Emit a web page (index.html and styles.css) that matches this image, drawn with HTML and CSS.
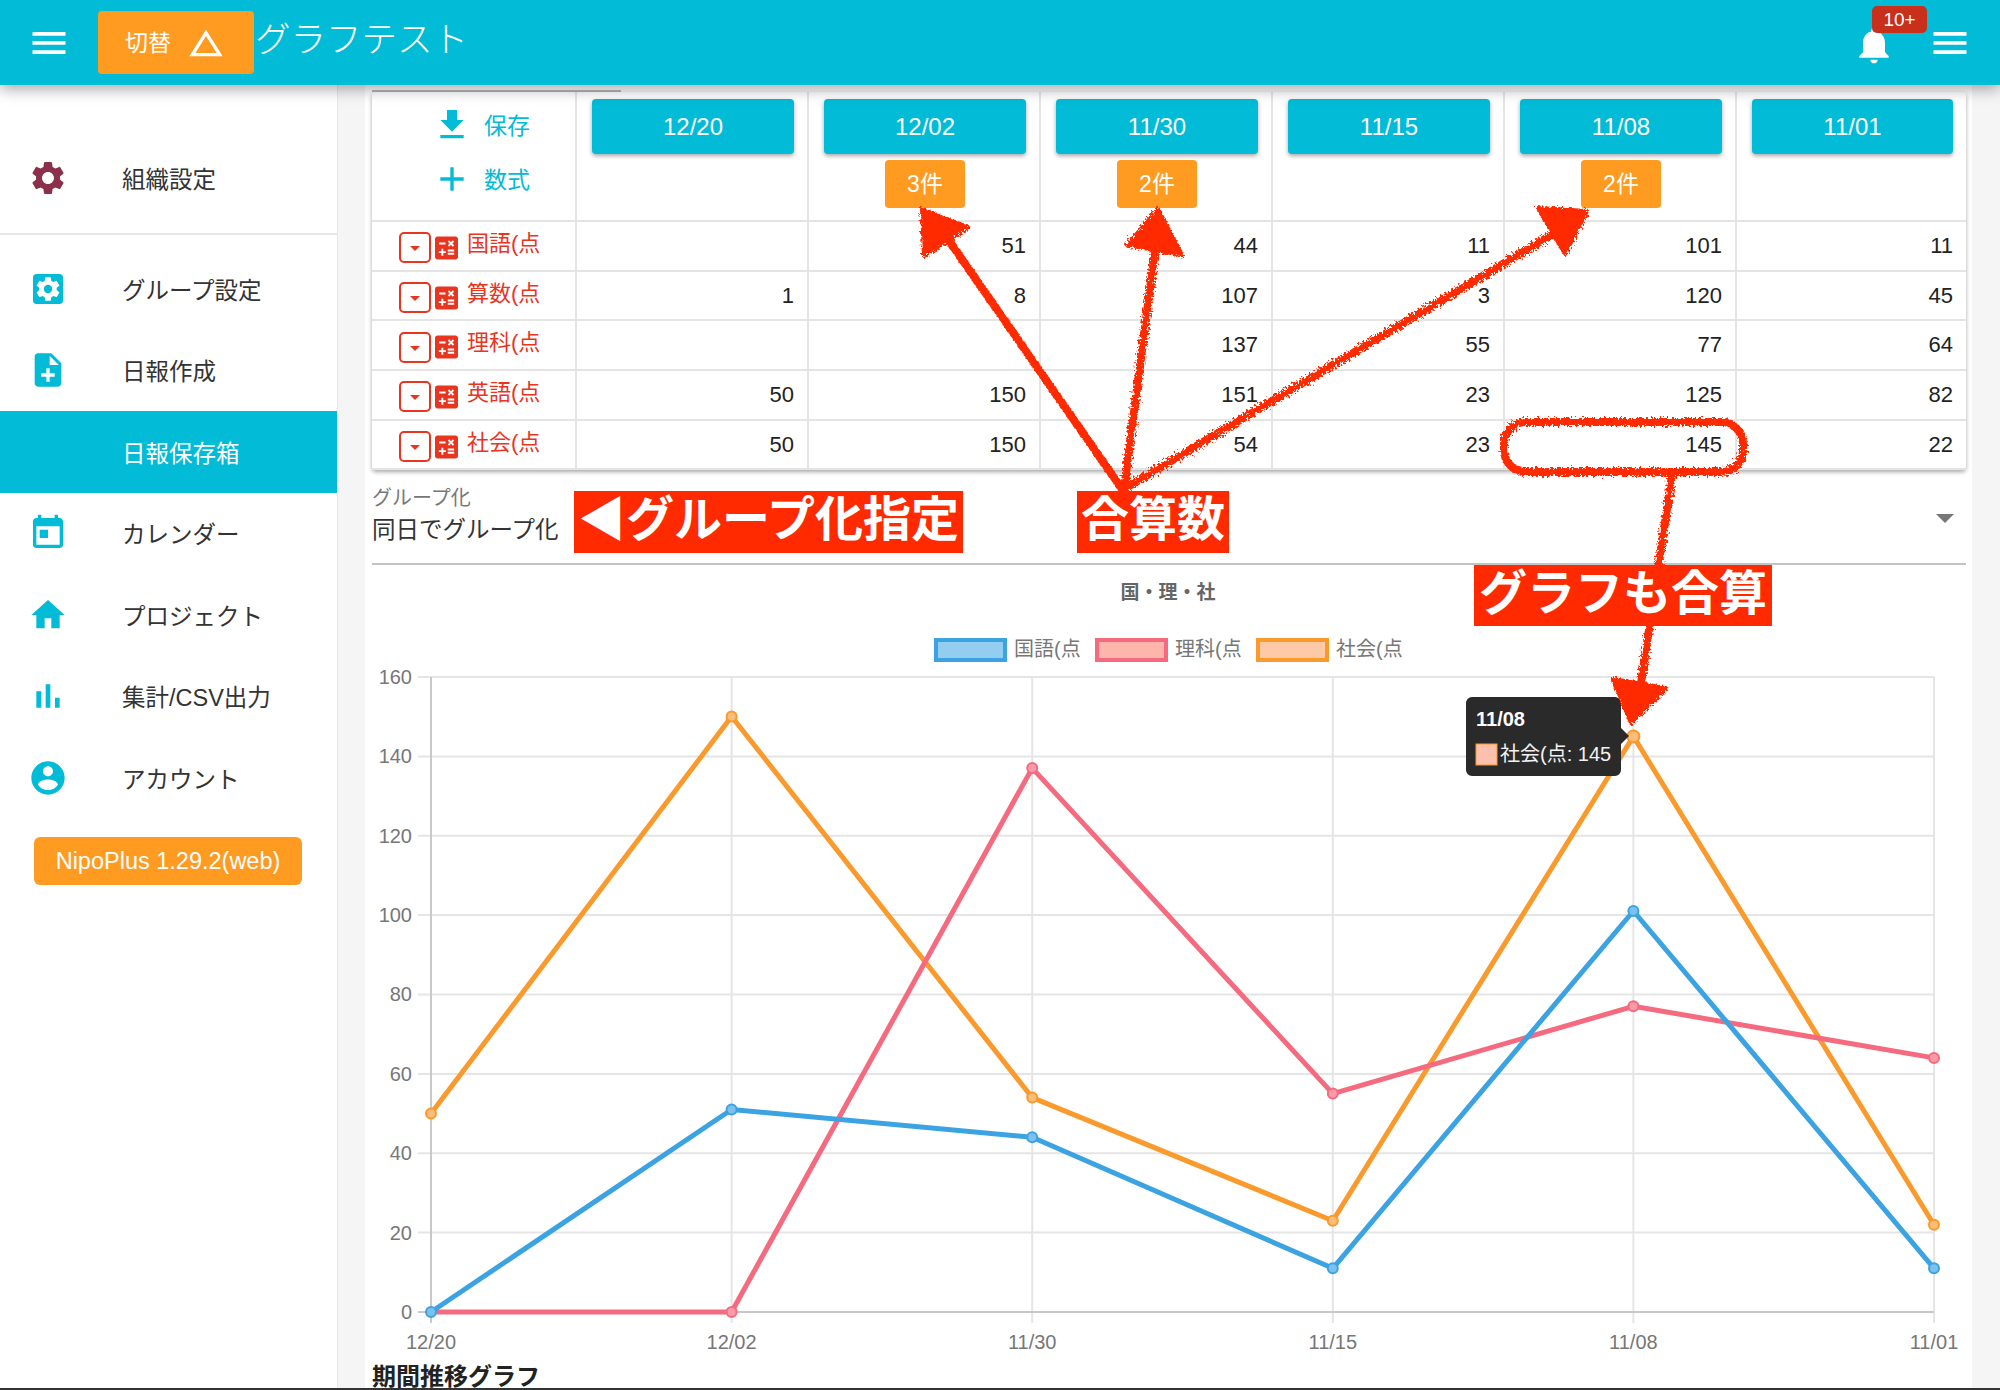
FILE: index.html
```html
<!DOCTYPE html>
<html lang="ja">
<head>
    <meta charset="UTF-8">
    <title>グラフテスト</title>
    <link rel="stylesheet" href="styles.css">
</head>
<body>
    <svg class="defs" width="0" height="0">
        <symbol id="i-menu" viewBox="0 0 24 24"><path d="M3 18h18v-2H3v2zm0-5h18v-2H3v2zm0-7v2h18V6H3z"/></symbol>
        <symbol id="i-calc" viewBox="3 3 18 18"><path d="M19 3H5c-1.1 0-2 .9-2 2v14c0 1.1.9 2 2 2h14c1.1 0 2-.9 2-2V5c0-1.1-.9-2-2-2zm-5.97 4.06L14.09 6l1.41 1.41L16.91 6l1.06 1.06-1.41 1.41 1.41 1.41-1.06 1.06-1.41-1.4-1.41 1.41-1.06-1.06 1.41-1.41-1.41-1.42zm-6.78.66h5v1.5h-5v-1.5zM11.5 16h-2v2H8v-2H6v-1.5h2v-2h1.5v2h2V16zm6.5 1.25h-5v-1.5h5v1.5zm0-2.5h-5v-1.5h5v1.5z"/></symbol>
        <filter id="rough" x="-5%" y="-5%" width="110%" height="110%">
            <feTurbulence type="fractalNoise" baseFrequency="0.45" numOctaves="2" seed="4"/>
            <feDisplacementMap in="SourceGraphic" scale="8"/>
        </filter>
    </svg>

    <header class="topbar">
        <svg class="menu-icon"><use href="#i-menu"/></svg>
        <button class="switch-btn"><span class="switch-text">切替</span>
            <svg class="switch-icon" viewBox="0 0 24 24"><path d="M12 7.77L18.39 18H5.61L12 7.77M12 4L2 20h20L12 4z"/></svg>
        </button>
        <h1 class="title">グラフテスト</h1>
        <div class="bell">
            <svg class="bell-icon" viewBox="0 0 24 24"><path d="M12 22c1.1 0 2-.9 2-2h-4c0 1.1.89 2 2 2zm6-6v-5c0-3.07-1.64-5.64-4.5-6.32V4c0-.83-.67-1.5-1.5-1.5s-1.5.67-1.5 1.5v.68C7.63 5.36 6 7.92 6 11v5l-2 2v1h16v-1l-2-2z"/></svg>
            <span class="badge">10+</span>
        </div>
        <svg class="menu-icon menu-right"><use href="#i-menu"/></svg>
    </header>

    <div class="layout">
        <nav class="sidebar">
            <div class="org">
                <a class="nav-item">
                    <svg class="nav-icon maroon" viewBox="0 0 24 24"><path d="M19.14 12.94c.04-.3.06-.61.06-.94 0-.32-.02-.64-.07-.94l2.03-1.58c.18-.14.23-.41.12-.61l-1.92-3.32c-.12-.22-.37-.29-.59-.22l-2.39.96c-.5-.38-1.03-.7-1.62-.94l-.36-2.54c-.04-.24-.24-.41-.48-.41h-3.84c-.24 0-.43.17-.47.41l-.36 2.54c-.59.24-1.13.57-1.62.94l-2.39-.96c-.22-.08-.47 0-.59.22L2.74 8.87c-.12.21-.08.47.12.61l2.03 1.58c-.05.3-.09.63-.09.94s.02.64.07.94l-2.03 1.58c-.18.14-.23.41-.12.61l1.92 3.32c.12.22.37.29.59.22l2.39-.96c.5.38 1.03.7 1.62.94l.36 2.54c.05.24.24.41.48.41h3.84c.24 0 .44-.17.47-.41l.36-2.54c.59-.24 1.13-.56 1.62-.94l2.39.96c.22.08.47 0 .59-.22l1.92-3.32c.12-.22.07-.47-.12-.61l-2.01-1.58zM12 15.6c-1.98 0-3.6-1.62-3.6-3.6s1.62-3.6 3.6-3.6 3.6 1.62 3.6 3.6-1.62 3.6-3.6 3.6z"/></svg>
                    組織設定
                </a>
            </div>
            <div class="nav-list">
                <a class="nav-item">
                    <svg class="nav-icon" viewBox="0 0 24 24"><path d="M19 3H5c-1.11 0-2 .9-2 2v14c0 1.1.89 2 2 2h14c1.11 0 2-.9 2-2V5c0-1.1-.89-2-2-2zm-1.75 9c0 .23-.02.46-.05.68l1.48 1.16c.13.11.17.3.08.45l-1.4 2.42c-.09.15-.27.21-.43.15l-1.74-.7c-.36.28-.76.51-1.18.69l-.26 1.85c-.03.17-.18.3-.35.3h-2.8c-.17 0-.32-.13-.35-.29l-.26-1.85c-.43-.18-.82-.41-1.18-.69l-1.74.7c-.16.06-.34 0-.43-.15l-1.4-2.42c-.09-.15-.05-.34.08-.45l1.48-1.16c-.03-.23-.05-.46-.05-.69 0-.23.02-.46.05-.68l-1.48-1.16c-.13-.11-.17-.3-.08-.45l1.4-2.42c.09-.15.27-.21.43-.15l1.74.7c.36-.28.76-.51 1.18-.69l.26-1.85c.03-.17.18-.3.35-.3h2.8c.17 0 .32.13.35.29l.26 1.85c.43.18.82.41 1.18.69l1.74-.7c.16-.06.34 0 .43.15l1.4 2.42c.09.15.05.34-.08.45l-1.48 1.16c.03.23.05.46.05.69z"/><circle cx="12" cy="12" r="2.5"/></svg>
                    グループ設定
                </a>
                <a class="nav-item">
                    <svg class="nav-icon" viewBox="0 0 24 24"><path d="M14 2H6c-1.1 0-1.99.9-1.99 2L4 20c0 1.1.89 2 1.99 2H18c1.1 0 2-.9 2-2V8l-6-6zm2 14h-3v3h-2v-3H8v-2h3v-3h2v3h3v2zm-3-7V3.5L18.5 9H13z"/></svg>
                    日報作成
                </a>
                <a class="nav-item active">
                    <span class="nav-icon"></span>
                    日報保存箱
                </a>
                <a class="nav-item">
                    <svg class="nav-icon" viewBox="0 0 24 24"><path d="M19 3h-1V1h-2v2H8V1H6v2H5c-1.11 0-1.99.9-1.99 2L3 19c0 1.1.89 2 2 2h14c1.1 0 2-.9 2-2V5c0-1.1-.9-2-2-2zm0 16H5V8h14v11zM7 10h5v5H7z"/></svg>
                    カレンダー
                </a>
                <a class="nav-item">
                    <svg class="nav-icon" viewBox="0 0 24 24"><path d="M10 20v-6h4v6h5v-8h3L12 3 2 12h3v8z"/></svg>
                    プロジェクト
                </a>
                <a class="nav-item">
                    <svg class="nav-icon" viewBox="0 0 24 24"><path d="M5 9.2h3V19H5zM10.6 5h2.8v14h-2.8zm5.6 8H19v6h-2.8z"/></svg>
                    集計/CSV出力
                </a>
                <a class="nav-item">
                    <svg class="nav-icon" viewBox="0 0 24 24"><path d="M12 2C6.48 2 2 6.48 2 12s4.48 10 10 10 10-4.48 10-10S17.52 2 12 2zm0 3c1.66 0 3 1.34 3 3s-1.34 3-3 3-3-1.34-3-3 1.34-3 3-3zm0 14.2c-2.5 0-4.71-1.28-6-3.22.03-1.99 4-3.08 6-3.08 1.99 0 5.97 1.09 6 3.08-1.29 1.94-3.5 3.22-6 3.22z"/></svg>
                    アカウント
                </a>
            </div>
            <div class="version">NipoPlus 1.29.2(web)</div>
        </nav>

        <main class="panel">
            <div class="scroll-thumb"></div>
            <table class="report">
                <colgroup>
                    <col class="col-name">
                    <col class="col-day"><col class="col-day"><col class="col-day"><col class="col-day"><col class="col-day"><col class="col-last">
                </colgroup>
                <thead>
                    <tr>
                        <th class="actions">
                            <div class="action">
                                <svg class="action-icon" viewBox="0 0 24 24"><path d="M19 9h-4V3H9v6H5l7 7 7-7zM5 18v2h14v-2H5z"/></svg>
                                <span class="action-text">保存</span>
                            </div>
                            <div class="action">
                                <svg class="action-icon" viewBox="0 0 24 24"><path d="M19 13h-6v6h-2v-6H5v-2h6V5h2v6h6v2z"/></svg>
                                <span class="action-text">数式</span>
                            </div>
                        </th>
                        <th><button class="date-btn">12/20</button></th>
                        <th><button class="date-btn">12/02</button><span class="count">3件</span></th>
                        <th><button class="date-btn">11/30</button><span class="count">2件</span></th>
                        <th><button class="date-btn">11/15</button></th>
                        <th><button class="date-btn">11/08</button><span class="count">2件</span></th>
                        <th><button class="date-btn">11/01</button></th>
                    </tr>
                </thead>
                <tbody>
                    <tr>
                        <td class="name"><div class="name-box"><span class="drop"></span><svg class="calc"><use href="#i-calc"/></svg><span class="name-text">国語(点</span></div></td>
                        <td></td><td>51</td><td>44</td><td>11</td><td>101</td><td>11</td>
                    </tr>
                    <tr>
                        <td class="name"><div class="name-box"><span class="drop"></span><svg class="calc"><use href="#i-calc"/></svg><span class="name-text">算数(点</span></div></td>
                        <td>1</td><td>8</td><td>107</td><td>3</td><td>120</td><td>45</td>
                    </tr>
                    <tr>
                        <td class="name"><div class="name-box"><span class="drop"></span><svg class="calc"><use href="#i-calc"/></svg><span class="name-text">理科(点</span></div></td>
                        <td></td><td></td><td>137</td><td>55</td><td>77</td><td>64</td>
                    </tr>
                    <tr>
                        <td class="name"><div class="name-box"><span class="drop"></span><svg class="calc"><use href="#i-calc"/></svg><span class="name-text">英語(点</span></div></td>
                        <td>50</td><td>150</td><td>151</td><td>23</td><td>125</td><td>82</td>
                    </tr>
                    <tr>
                        <td class="name"><div class="name-box"><span class="drop"></span><svg class="calc"><use href="#i-calc"/></svg><span class="name-text">社会(点</span></div></td>
                        <td>50</td><td>150</td><td>54</td><td>23</td><td>145</td><td>22</td>
                    </tr>
                </tbody>
            </table>

            <div class="group-select">
                <div class="select-label">グループ化</div>
                <div class="select-value">同日でグループ化</div>
                <span class="select-arrow"></span>
            </div>

            <svg class="chart" viewBox="365 564 1607 800">
                <g class="grid">
                    <line x1="418" y1="676" x2="1934" y2="676"/>
                    <line x1="418" y1="755.4" x2="1934" y2="755.4"/>
                    <line x1="418" y1="834.8" x2="1934" y2="834.8"/>
                    <line x1="418" y1="914.1" x2="1934" y2="914.1"/>
                    <line x1="418" y1="993.5" x2="1934" y2="993.5"/>
                    <line x1="418" y1="1072.9" x2="1934" y2="1072.9"/>
                    <line x1="418" y1="1152.3" x2="1934" y2="1152.3"/>
                    <line x1="418" y1="1231.6" x2="1934" y2="1231.6"/>
                    <line x1="731.6" y1="676" x2="731.6" y2="1322"/>
                    <line x1="1032.2" y1="676" x2="1032.2" y2="1322"/>
                    <line x1="1332.8" y1="676" x2="1332.8" y2="1322"/>
                    <line x1="1633.4" y1="676" x2="1633.4" y2="1322"/>
                    <line x1="1934" y1="676" x2="1934" y2="1322"/>
                </g>
                <g class="axis">
                    <line x1="431" y1="676" x2="431" y2="1322"/>
                    <line x1="418" y1="1311" x2="1934" y2="1311"/>
                </g>
                <g class="ticks-y">
                    <text x="412" y="683">160</text>
                    <text x="412" y="762">140</text>
                    <text x="412" y="842">120</text>
                    <text x="412" y="921">100</text>
                    <text x="412" y="1000">80</text>
                    <text x="412" y="1080">60</text>
                    <text x="412" y="1159">40</text>
                    <text x="412" y="1239">20</text>
                    <text x="412" y="1318">0</text>
                </g>
                <g class="ticks-x">
                    <text x="431" y="1348">12/20</text>
                    <text x="731.6" y="1348">12/02</text>
                    <text x="1032.2" y="1348">11/30</text>
                    <text x="1332.8" y="1348">11/15</text>
                    <text x="1633.4" y="1348">11/08</text>
                    <text x="1934" y="1348">11/01</text>
                </g>
                <text class="chart-title" x="1168" y="598">国・理・社</text>
                <g class="legend">
                    <rect class="s-blue" x="936" y="639" width="69" height="20"/>
                    <text x="1014" y="655">国語(点</text>
                    <rect class="s-pink" x="1097" y="639" width="69" height="20"/>
                    <text x="1175" y="655">理科(点</text>
                    <rect class="s-orange" x="1258" y="639" width="69" height="20"/>
                    <text x="1336" y="655">社会(点</text>
                </g>

                <g class="s-orange">
                    <polyline points="431,1112.5 731.6,715.5 1032.2,1096.6 1332.8,1219.7 1633.4,735.4 1934,1223.7"/>
                    <circle cx="431" cy="1112.5" r="5"/><circle cx="731.6" cy="715.5" r="5"/><circle cx="1032.2" cy="1096.6" r="5"/><circle cx="1332.8" cy="1219.7" r="5"/><circle cx="1633.4" cy="735.4" r="6"/><circle cx="1934" cy="1223.7" r="5"/>
                </g>
                <g class="s-pink">
                    <polyline points="431,1311 731.6,1311 1032.2,767.1 1332.8,1092.6 1633.4,1005.3 1934,1056.9"/>
                    <circle cx="731.6" cy="1311" r="5"/><circle cx="1032.2" cy="767.1" r="5"/><circle cx="1332.8" cy="1092.6" r="5"/><circle cx="1633.4" cy="1005.3" r="5"/><circle cx="1934" cy="1056.9" r="5"/>
                </g>
                <g class="s-blue">
                    <polyline points="431,1311 731.6,1108.5 1032.2,1136.3 1332.8,1267.3 1633.4,910 1934,1267.3"/>
                    <circle cx="431" cy="1311" r="5"/><circle cx="731.6" cy="1108.5" r="5"/><circle cx="1032.2" cy="1136.3" r="5"/><circle cx="1332.8" cy="1267.3" r="5"/><circle cx="1633.4" cy="910" r="5"/><circle cx="1934" cy="1267.3" r="5"/>
                </g>

                <g class="tip">
                    <path d="M1472 696h143a6 6 0 0 1 6 6v25l8 8-8 8v26a6 6 0 0 1-6 6h-143a6 6 0 0 1-6-6v-67a6 6 0 0 1 6-6z"/>
                    <text class="tip-title" x="1476" y="725">11/08</text>
                    <rect class="tip-swatch" x="1476" y="743" width="21" height="21"/>
                    <text class="tip-text" x="1500" y="760">社会(点: 145</text>
                </g>
            </svg>

            <div class="chart-caption">期間推移グラフ</div>
        </main>
    </div>

    <!-- 手書きの注釈 -->
    <svg class="marks" viewBox="0 0 2000 1390">
        <g filter="url(#rough)">
            <path class="shaft" d="M1122 489L945 235"/>
            <path class="head" d="M922 209L968 227L924 256Z"/>
            <path class="shaft" d="M1124 489L1155 250"/>
            <path class="head" d="M1158 209L1127 245L1182 255Z"/>
            <path class="shaft" d="M1124 489L1560 230"/>
            <path class="head" d="M1587 211L1538 208L1565 254Z"/>
            <rect class="ring" x="1504" y="422" width="239" height="50" rx="22"/>
            <path class="shaft" d="M1672 475L1640 690"/>
            <path class="head" d="M1631 723L1613 679L1666 688Z"/>
        </g>
    </svg>
    <div class="note note-group">◀グループ化指定</div>
    <div class="note note-sum">合算数</div>
    <div class="note note-graph">グラフも合算</div>
</body>
</html>
```

FILE: styles.css
```css
html, body {
    margin: 0;
    height: 1390px;
    overflow: hidden;
}
body {
    position: relative;
    font-family: "Liberation Sans", "Noto Sans CJK JP", sans-serif;
    color: #333;
    background: #f5f5f5;
    border-bottom: 2px solid #333;
    box-sizing: border-box;
}
.defs {
    position: absolute;
}
.topbar {
    position: relative;
    z-index: 2;
    height: 85px;
    display: flex;
    align-items: center;
    background: #02bbd7;
    box-shadow: 0 4px 14px rgba(0, 0, 0, 0.35);
    color: #fff;
}
.menu-icon {
    width: 44px;
    height: 44px;
    margin-left: 27px;
    fill: #fff;
}
.switch-btn {
    display: flex;
    align-items: center;
    width: 156px;
    height: 63px;
    margin-left: 27px;
    padding: 0 0 0 27px;
    border: 0;
    border-radius: 4px;
    background: #ff9b21;
    color: #fff;
    font: 23px "Liberation Sans", "Noto Sans CJK JP", sans-serif;
}
.switch-text {
    margin-top: -3px;
}
.switch-icon {
    width: 40px;
    height: 40px;
    margin-left: 15px;
    fill: #fff;
}
.title {
    margin: -12px 0 0 1px;
    font-size: 35.5px;
    font-weight: 300;
}
.bell {
    position: relative;
    margin-left: auto;
    height: 44px;
}
.bell-icon {
    display: block;
    width: 44px;
    height: 44px;
    margin-top: 2px;
    fill: #fff;
}
.badge {
    position: absolute;
    left: 20px;
    top: -15px;
    width: 55px;
    height: 27px;
    border-radius: 5px;
    background: #c9301c;
    font-size: 19px;
    line-height: 27px;
    text-align: center;
}
.menu-right {
    margin-left: 32px;
    margin-right: 28px;
}
.layout {
    display: flex;
    height: 1303px;
}
.sidebar {
    width: 338px;
    flex: none;
    box-sizing: border-box;
    background: #fff;
    border-right: 1px solid #e8e8e8;
}
.org {
    height: 150px;
    box-sizing: border-box;
    padding-top: 52px;
    border-bottom: 2px solid #e6e6e6;
}
.nav-list {
    padding-top: 13px;
}
.nav-item {
    display: flex;
    align-items: center;
    gap: 54px;
    height: 81.5px;
    padding-left: 28px;
    font-size: 23.5px;
    color: #333;
}
.nav-icon {
    width: 40px;
    height: 40px;
    flex: none;
    fill: #02bbd7;
}
.nav-icon.maroon {
    fill: #8b2f4c;
}
.nav-item.active {
    background: #02bbd7;
    color: #fff;
}
.version {
    margin: 18px 0 0 34px;
    width: 268px;
    height: 48px;
    border-radius: 6px;
    background: #ff9b21;
    color: #fff;
    font-size: 23.5px;
    line-height: 48px;
    text-align: center;
}
.panel {
    width: 1607px;
    margin-left: 27px;
    padding: 5px 6px 0 7px;
    box-sizing: border-box;
    background: #fff;
}
.scroll-thumb {
    width: 249px;
    height: 2px;
    background: #bbb;
}
.report {
    width: 1594px;
    table-layout: fixed;
    border-collapse: collapse;
    border-radius: 4px;
    box-shadow: 0 2px 4px rgba(0, 0, 0, 0.35);
    font-size: 22px;
}
.col-name {
    width: 204px;
}
.col-day {
    width: 232px;
}
.col-last {
    width: 230px;
}
.report th,
.report td {
    border: 2px solid #e4e4e4;
    padding: 0;
}
.report tr > :first-child {
    border-left: 0;
}
.report tr > :last-child {
    border-right: 0;
}
.report thead th {
    height: 129px;
    border-top: 0;
    padding: 7px 13px 0 15px;
    vertical-align: top;
    font-weight: 400;
    box-sizing: border-box;
}
.report td {
    height: 49.7px;
    box-sizing: border-box;
    padding-right: 13px;
    text-align: right;
    color: #222;
}
.report thead .actions {
    padding: 6px 0 0 60px;
}
.action {
    display: flex;
    align-items: center;
    gap: 12px;
    height: 54px;
    font-size: 23px;
    color: #02bbd7;
}
.action-text {
    margin-top: -3px;
}
.action-icon {
    width: 40px;
    height: 40px;
    fill: #02bbd7;
}
.date-btn {
    display: block;
    width: 100%;
    height: 55px;
    border: 0;
    border-radius: 4px;
    background: #02bbd7;
    box-shadow: 0 2px 4px rgba(0, 0, 0, 0.35);
    color: #fff;
    font: 24px "Liberation Sans", sans-serif;
}
.count {
    display: block;
    width: 80px;
    height: 48px;
    margin: 6px auto 0;
    border-radius: 4px;
    background: #ff9b21;
    color: #fff;
    font-size: 23px;
    line-height: 48px;
}
.report td.name {
    padding: 0 0 0 27px;
    text-align: left;
}
.name-box {
    display: flex;
    align-items: center;
    height: 40px;
    font-size: 22px;
    line-height: 30px;
    color: #e8351f;
}
.name-text {
    margin-top: -4px;
}
.drop {
    position: relative;
    width: 32px;
    height: 31px;
    margin-top: 4px;
    box-sizing: border-box;
    border: 2px solid #e8351f;
    border-radius: 5px;
}
.drop:after {
    content: '';
    position: absolute;
    left: 9px;
    top: 12px;
    border-left: 5px solid transparent;
    border-right: 5px solid transparent;
    border-top: 5px solid #e8351f;
}
.calc {
    width: 23px;
    height: 24px;
    margin: 4px 9px 0 4px;
    fill: #e8351f;
}
.group-select {
    position: relative;
    height: 95px;
    box-sizing: border-box;
    padding-top: 16px;
    border-bottom: 2px solid #c4c4c4;
}
.select-label {
    font-size: 20px;
    line-height: 24px;
    color: #777;
}
.select-value {
    margin-top: 4px;
    font-size: 23.5px;
    line-height: 32px;
    color: #333;
}
.select-arrow {
    position: absolute;
    right: 12px;
    top: 44px;
    border-left: 9px solid transparent;
    border-right: 9px solid transparent;
    border-top: 9px solid #777;
}
.chart {
    display: block;
    width: 1607px;
    height: 800px;
    margin-left: -7px;
    font-family: "Liberation Sans", "Noto Sans CJK JP", sans-serif;
    overflow: visible;
}
.grid line {
    stroke: #e5e5e5;
    stroke-width: 2;
}
.axis line {
    stroke: #c8c8c8;
    stroke-width: 2;
}
.ticks-y text,
.ticks-x text,
.legend text {
    font-size: 20px;
    fill: #777;
}
.ticks-y text {
    text-anchor: end;
}
.ticks-x text {
    text-anchor: middle;
}
.chart-title {
    font-size: 19px;
    font-weight: 700;
    fill: #666;
    text-anchor: middle;
}
.s-blue polyline,
.s-pink polyline,
.s-orange polyline {
    fill: none;
    stroke-width: 5;
    stroke-linejoin: round;
}
.s-blue polyline,
.s-blue circle,
rect.s-blue {
    stroke: #3ca3e2;
}
.s-pink polyline,
.s-pink circle,
rect.s-pink {
    stroke: #f56a7e;
}
.s-orange polyline,
.s-orange circle,
rect.s-orange {
    stroke: #fb9a2c;
}
.s-blue circle,
.s-pink circle,
.s-orange circle {
    stroke-width: 2;
}
.s-blue circle {
    fill: #7cc0ee;
}
.s-pink circle {
    fill: #f99aa8;
}
.s-orange circle {
    fill: #fcbd78;
}
rect.s-blue {
    fill: #93cdf0;
    stroke-width: 4;
}
rect.s-pink {
    fill: #fdb5ac;
    stroke-width: 4;
}
rect.s-orange {
    fill: #fdc9a6;
    stroke-width: 4;
}
.tip path {
    fill: #2a2a2a;
}
.tip-title {
    font-size: 20px;
    font-weight: 700;
    fill: #fff;
}
.tip-swatch {
    fill: #fdbfae;
    stroke: #fb9a2c;
    stroke-width: 1;
}
.tip-text {
    font-size: 20px;
    fill: #f2f2f2;
}
.chart-caption {
    font-size: 24px;
    font-weight: 700;
    line-height: 24px;
    color: #222;
}
.marks {
    position: absolute;
    left: 0;
    top: 0;
    width: 2000px;
    height: 1390px;
    z-index: 3;
    pointer-events: none;
}
.shaft {
    fill: none;
    stroke: #ff2a00;
    stroke-width: 8;
    stroke-linecap: round;
}
.head {
    fill: #ff2a00;
    stroke: #ff2a00;
    stroke-width: 4;
    stroke-linejoin: round;
}
.ring {
    fill: none;
    stroke: #ff2a00;
    stroke-width: 8;
}
.note {
    position: absolute;
    z-index: 4;
    display: flex;
    align-items: center;
    justify-content: center;
    background: #ff2a00;
    color: #fff;
    font-size: 48px;
    font-weight: 700;
    line-height: 56px;
    padding-bottom: 4px;
    box-sizing: border-box;
    white-space: nowrap;
}
.note-group {
    left: 574px;
    top: 491px;
    width: 389px;
    height: 62px;
}
.note-sum {
    left: 1077px;
    top: 491px;
    width: 152px;
    height: 62px;
}
.note-graph {
    left: 1474px;
    top: 565px;
    width: 298px;
    height: 61px;
}
```
